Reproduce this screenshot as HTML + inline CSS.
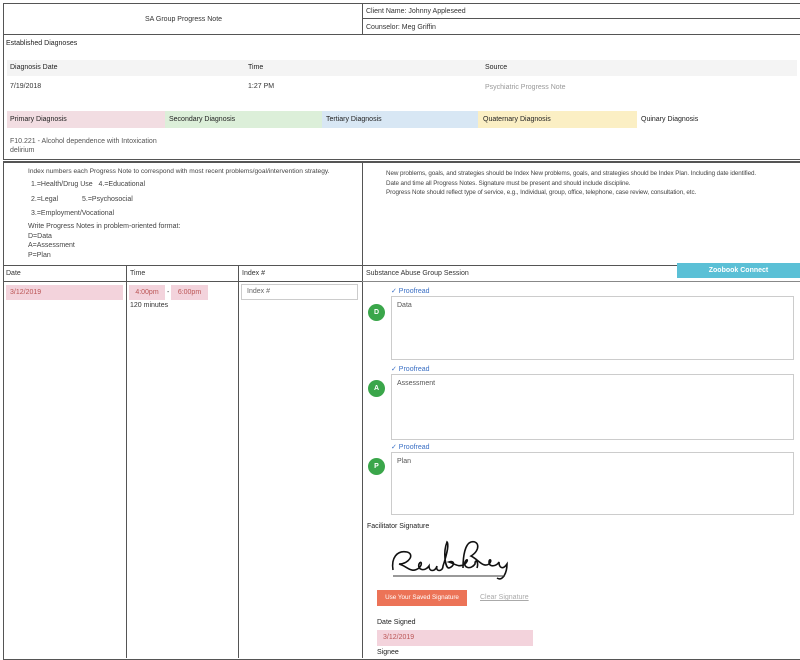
<!DOCTYPE html>
<html><head><style>
body{margin:0;width:800px;height:658px;overflow:hidden;background:#fff;font-family:"Liberation Sans",sans-serif;font-size:7px;color:#333;position:relative}
.a{position:absolute;white-space:nowrap}
.circ{position:absolute;width:17px;height:17px;border-radius:50%;background:#3aa64a;color:#fff;font-size:7px;font-weight:bold;text-align:center;line-height:17px}
.ta{position:absolute;border:1px solid #ccc;background:#fff;padding:5px;box-sizing:border-box;font-size:7px;color:#555}
.pf{position:absolute;color:#3a6fc4;font-size:7px}
</style></head><body>
<div class="a" style="left:3px;top:3px;width:796px;height:155px;border:1px solid #555"></div>
<div class="a" style="left:362px;top:3px;width:1px;height:31px;background:#555"></div>
<div class="a" style="left:3px;top:34px;width:797px;height:1px;background:#555"></div>
<div class="a" style="left:362px;top:18px;width:438px;height:1px;background:#555"></div>
<div class="a" style="left:145px;top:16px">SA Group Progress Note</div>
<div class="a" style="left:366px;top:8px">Client Name: Johnny Appleseed</div>
<div class="a" style="left:366px;top:24px">Counselor: Meg Griffin</div>
<div class="a" style="left:6px;top:40px;color:#222">Established Diagnoses</div>
<div class="a" style="left:7px;top:60px;width:790px;height:16px;background:#f4f4f4"></div>
<div class="a" style="left:10px;top:64px;color:#222">Diagnosis Date</div>
<div class="a" style="left:248px;top:64px;color:#222">Time</div>
<div class="a" style="left:485px;top:64px;color:#222">Source</div>
<div class="a" style="left:10px;top:83px">7/19/2018</div>
<div class="a" style="left:248px;top:83px">1:27 PM</div>
<div class="a" style="left:485px;top:84px;color:#999">Psychiatric Progress Note</div>
<div class="a" style="left:7px;top:111px;width:158px;height:17px;background:#f2dde2"></div>
<div class="a" style="left:165px;top:111px;width:157px;height:17px;background:#dcefd9"></div>
<div class="a" style="left:322px;top:111px;width:156px;height:17px;background:#d8e7f4"></div>
<div class="a" style="left:478px;top:111px;width:159px;height:17px;background:#fbefc4"></div>
<div class="a" style="left:10px;top:116px;color:#222">Primary Diagnosis</div>
<div class="a" style="left:169px;top:116px;color:#222">Secondary Diagnosis</div>
<div class="a" style="left:326px;top:116px;color:#222">Tertiary Diagnosis</div>
<div class="a" style="left:483px;top:116px;color:#222">Quaternary Diagnosis</div>
<div class="a" style="left:641px;top:116px;color:#222">Quinary Diagnosis</div>
<div class="a" style="left:10px;top:137px;line-height:9px;color:#555">F10.221 - Alcohol dependence with Intoxication<br>delirium</div>
<div class="a" style="left:3px;top:161px;width:796px;height:496px;border:1px solid #555;border-top:2px solid #555"></div>
<div class="a" style="left:362px;top:161px;width:1px;height:497px;background:#555"></div>
<div class="a" style="left:28px;top:168px;color:#444;font-size:6.6px">Index numbers each Progress Note to correspond with most recent problems/goal/intervention strategy.</div>
<div class="a" style="left:31px;top:181px;color:#444">1.=Health/Drug Use &nbsp;&nbsp;4.=Educational</div>
<div class="a" style="left:31px;top:196px;color:#444">2.=Legal</div><div class="a" style="left:82px;top:196px;color:#444">5.=Psychosocial</div>
<div class="a" style="left:31px;top:210px;color:#444">3.=Employment/Vocational</div>
<div class="a" style="left:28px;top:222px;line-height:9.5px;color:#444">Write Progress Notes in problem-oriented format:<br>D=Data<br>A=Assessment<br>P=Plan</div>
<div class="a" style="left:386px;top:169px;line-height:9.5px;color:#444;font-size:6.3px;letter-spacing:-0.1px">New problems, goals, and strategies should be Index New problems, goals, and strategies should be Index Plan. Including date identified.<br>Date and time all Progress Notes. Signature must be present and should include discipline.<br>Progress Note should reflect type of service, e.g., Individual, group, office, telephone, case review, consultation, etc.</div>
<div class="a" style="left:3px;top:265px;width:797px;height:1px;background:#555"></div>
<div class="a" style="left:3px;top:281px;width:359px;height:1px;background:#555"></div>
<div class="a" style="left:362px;top:281px;width:438px;height:1px;background:#888"></div>
<div class="a" style="left:126px;top:265px;width:1px;height:393px;background:#555"></div>
<div class="a" style="left:238px;top:265px;width:1px;height:393px;background:#555"></div>
<div class="a" style="left:6px;top:270px">Date</div>
<div class="a" style="left:130px;top:270px">Time</div>
<div class="a" style="left:242px;top:270px">Index #</div>
<div class="a" style="left:366px;top:270px">Substance Abuse Group Session</div>
<div class="a" style="left:677px;top:263px;width:123px;height:15px;background:#5bc0d6;color:#fff;font-weight:bold;text-align:center;line-height:15px">Zoobook Connect</div>
<div class="a" style="left:6px;top:285px;width:117px;height:15px;background:#f3d3dc;color:#b55;line-height:15px;padding-left:4px;box-sizing:border-box">3/12/2019</div>
<div class="a" style="left:129px;top:285px;width:36px;height:15px;background:#f3d3dc;color:#b55;line-height:15px;text-align:center">4:00pm</div>
<div class="a" style="left:167px;top:289px">-</div>
<div class="a" style="left:171px;top:285px;width:37px;height:15px;background:#f3d3dc;color:#b55;line-height:15px;text-align:center">6:00pm</div>
<div class="a" style="left:130px;top:302px">120 minutes</div>
<div class="a" style="left:241px;top:284px;width:117px;height:16px;border:1px solid #ccc;box-sizing:border-box;line-height:14px;padding-left:5px;color:#666">Index #</div>
<div class="pf" style="left:391px;top:287px">✓ Proofread</div>
<div class="circ" style="left:368px;top:304px">D</div>
<div class="ta" style="left:391px;top:296px;width:403px;height:64px">Data</div>
<div class="pf" style="left:391px;top:365px">✓ Proofread</div>
<div class="circ" style="left:368px;top:380px">A</div>
<div class="ta" style="left:391px;top:374px;width:403px;height:66px">Assessment</div>
<div class="pf" style="left:391px;top:443px">✓ Proofread</div>
<div class="circ" style="left:368px;top:458px">P</div>
<div class="ta" style="left:391px;top:452px;width:403px;height:63px">Plan</div>
<div class="a" style="left:367px;top:523px;color:#222">Facilitator Signature</div>
<svg class="a" style="left:385px;top:538px" width="130" height="48" viewBox="0 0 130 48">
<path d="M8 32 C6 20,12 12,22 14 C30 16,24 26,14 26 C22 28,26 36,34 30 C38 26,36 22,34 26 C32 32,40 34,44 28 C44 34,50 34,52 28 C50 34,58 34,58 28 C62 16,64 6,62 4 C58 14,60 30,64 30 C70 28,70 22,64 24 C70 26,74 30,80 26 C84 22,82 20,80 24 C78 30,86 32,90 26 C90 20,94 24,92 30 M78 30 C78 18,80 6,86 4 C94 2,96 12,86 18 C94 22,98 30,104 26 C108 22,104 20,104 24 C104 30,112 28,114 24 C114 30,118 32,122 26 C122 34,118 44,112 40" fill="none" stroke="#111" stroke-width="1.6"/>
<line x1="8" y1="38" x2="120" y2="38" stroke="#333" stroke-width="1"/>
</svg>
<div class="a" style="left:377px;top:590px;width:90px;height:16px;background:#ec7357;color:#fff;text-align:center;line-height:16px;font-size:6.3px">Use Your Saved Signature</div>
<div class="a" style="left:480px;top:594px;color:#aaa;text-decoration:underline">Clear Signature</div>
<div class="a" style="left:377px;top:619px;color:#222">Date Signed</div>
<div class="a" style="left:377px;top:630px;width:156px;height:16px;background:#f3d3dc;color:#b55;line-height:16px;padding-left:6px;box-sizing:border-box">3/12/2019</div>
<div class="a" style="left:377px;top:649px;color:#222">Signee</div>
</body></html>
